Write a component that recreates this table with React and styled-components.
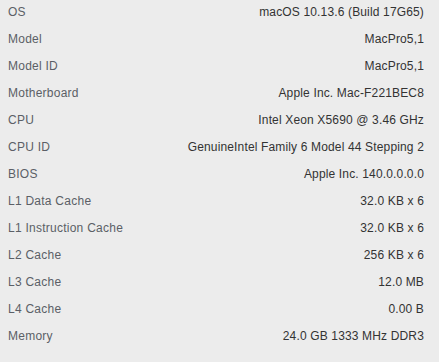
import React from 'react';
import styled, { createGlobalStyle } from 'styled-components';

const GlobalStyle = createGlobalStyle`
  html, body {
    margin: 0;
    padding: 0;
    background: #ececec;
  }
`;

const Panel = styled.div`
  width: 439px;
  height: 362px;
  padding: 0 15px 0 8px;
  box-sizing: border-box;
  background: #ececec;
  font-family: "Liberation Sans", Arial, sans-serif;
  font-size: 12px;
`;

const Row = styled.div`
  display: flex;
  justify-content: space-between;
  align-items: flex-start;
  height: 27px;
  line-height: 24px;
`;

const Label = styled.span`
  color: #5b5f66;
  letter-spacing: 0.25px;
`;

const Value = styled.span`
  color: #333333;
  letter-spacing: 0.15px;
`;

const specs = [
  ['OS', 'macOS 10.13.6 (Build 17G65)'],
  ['Model', 'MacPro5,1'],
  ['Model ID', 'MacPro5,1'],
  ['Motherboard', 'Apple Inc. Mac-F221BEC8'],
  ['CPU', 'Intel Xeon X5690 @ 3.46 GHz'],
  ['CPU ID', 'GenuineIntel Family 6 Model 44 Stepping 2'],
  ['BIOS', 'Apple Inc. 140.0.0.0.0'],
  ['L1 Data Cache', '32.0 KB x 6'],
  ['L1 Instruction Cache', '32.0 KB x 6'],
  ['L2 Cache', '256 KB x 6'],
  ['L3 Cache', '12.0 MB'],
  ['L4 Cache', '0.00 B'],
  ['Memory', '24.0 GB 1333 MHz DDR3'],
];

export default function App() {
  return (
    <>
      <GlobalStyle />
      <Panel>
        {specs.map(([label, value]) => (
          <Row key={label}>
            <Label>{label}</Label>
            <Value>{value}</Value>
          </Row>
        ))}
      </Panel>
    </>
  );
}
